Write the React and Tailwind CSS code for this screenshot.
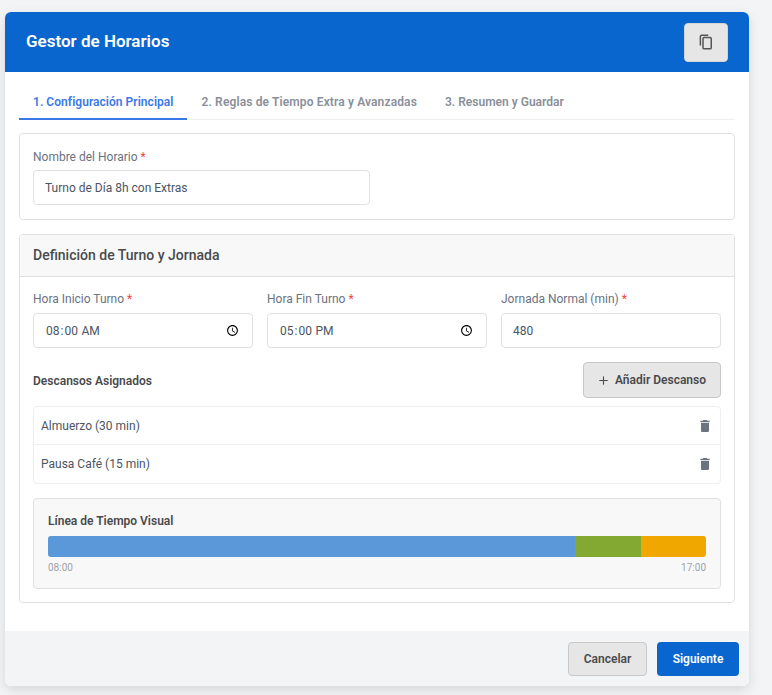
import { Plus } from "lucide-react";

const BREAKS = ["Almuerzo (30 min)", "Pausa Café (15 min)"];

const SHIFT_FIELDS = [
  { label: "Hora Inicio Turno", type: "time", value: "08:00" },
  { label: "Hora Fin Turno", type: "time", value: "17:00" },
  { label: "Jornada Normal (min)", type: "text", value: "480" },
];

const TABS = [
  { label: "1. Configuración Principal", className: "border-[#3b78e7] tracking-[0.04px] text-[#3b78e7]" },
  { label: "2. Reglas de Tiempo Extra y Avanzadas", className: "border-transparent tracking-[0.13px] text-[#8a8f99]" },
  { label: "3. Resumen y Guardar", className: "border-transparent text-[#8a8f99]" },
];

function CopyIcon() {
  return (
    <svg viewBox="0 0 24 24" className="h-[18px] w-[18px]" fill="none" stroke="#555" strokeWidth="2" aria-hidden="true">
      <rect x="8" y="6" width="11" height="15" rx="1.5" />
      <path d="M4.5 16.5V4.5A1.5 1.5 0 0 1 6 3h9" />
    </svg>
  );
}

function TrashIcon() {
  return (
    <svg viewBox="0 0 24 24" className="h-4 w-4" fill="#6b7280" aria-hidden="true">
      <path d="M6 19c0 1.1.9 2 2 2h8c1.1 0 2-.9 2-2V7H6v12zM19 4h-3.5l-1-1h-5l-1 1H5v2h14V4z" />
    </svg>
  );
}

function Field({ label, children, className = "", labelClass = "mb-[5px]" }) {
  return (
    <div className={className}>
      <label className={`block text-[12px] leading-[18px] text-[#6b7280] ${labelClass}`}>
        {label} <span className="text-[#ef4444]">*</span>
      </label>
      {children}
    </div>
  );
}

const inputClass =
  "block h-[35px] w-full rounded-[4px] border border-[#e0e0e0] bg-white pl-[11px] pr-[10px] text-[12px] text-[#4b5563] outline-none";

export default function App() {
  return (
    <div className="min-h-screen bg-[#f3f4f6] pl-[5px] pt-3 font-['Roboto',sans-serif]">
      <div className="w-[744px] overflow-hidden rounded-[6px] bg-white shadow-[0_4px_12px_rgba(0,0,0,0.12)]">
        <header className="flex h-[60px] items-center justify-between bg-[#0a66cf] pl-[21px] pr-[21px]">
          <h1 className="text-[17px] font-semibold text-white">Gestor de Horarios</h1>
          <button type="button" className="flex h-[39px] w-[44px] items-center justify-center rounded-[4px] border border-[#d4d4d4] bg-[#e6e6e6]">
            <CopyIcon />
          </button>
        </header>

        <div className="px-[14px] pb-7 pt-3">
          <nav className="flex h-[36px] border-b border-[#eeeff1]">
            {TABS.map((tab) => (
              <button
                key={tab.label}
                type="button"
                className={`-mb-px border-b-2 px-[14px] pt-px text-[12px] font-semibold ${tab.className}`}
              >
                {tab.label}
              </button>
            ))}
          </nav>

          <section className="mt-[13px] h-[87px] rounded-[4px] border border-[#e0e0e0] px-[13px] pt-[14px]">
            <Field label="Nombre del Horario" className="w-[337px]" labelClass="mb-1">
              <input className={inputClass} defaultValue="Turno de Día 8h con Extras" />
            </Field>
          </section>

          <section className="mt-[14px] overflow-hidden rounded-[4px] border border-[#e0e0e0]">
            <div className="flex h-[42px] items-center border-b border-[#e0e0e0] bg-[#f8f8f9] px-[13px]">
              <h2 className="text-[14px] font-medium text-[#4a4a4a]">Definición de Turno y Jornada</h2>
            </div>

            <div className="px-[13px] pb-[13px] pt-[13px]">
              <div className="grid grid-cols-3 gap-[14px]">
                {SHIFT_FIELDS.map((field) => (
                  <Field key={field.label} label={field.label}>
                    <input type={field.type} className={inputClass} defaultValue={field.value} />
                  </Field>
                ))}
              </div>

              <div className="mt-[14px] flex items-center justify-between">
                <h3 className="pt-px text-[12px] font-semibold text-[#4a4a4a]">Descansos Asignados</h3>
                <button
                  type="button"
                  className="flex h-9 w-[138px] items-center justify-center gap-[5px] rounded-[4px] border border-[#c9c9c9] bg-[#e6e6e6] pr-px text-[12px] font-semibold text-[#4a4a4a]"
                >
                  <Plus className="h-[13px] w-[13px]" aria-hidden="true" />
                  Añadir Descanso
                </button>
              </div>

              <ul className="mt-2 rounded-[4px] border border-[#eeeff1]">
                {BREAKS.map((item) => (
                  <li key={item} className="flex h-[38px] items-center justify-between border-b border-[#eeeff1] pl-[7px] pr-[7px] text-[12px] text-[#4b5563] last:border-b-0">
                    {item}
                    <TrashIcon />
                  </li>
                ))}
              </ul>

              <div className="mt-[14px] h-[91px] rounded-[4px] border border-[#e0e0e0] bg-[#f8f8f9] px-[14px] pt-[14px]">
                <h4 className="text-[12px] font-semibold leading-[16px] text-[#4a4a4a]">Línea de Tiempo Visual</h4>
                <div className="mt-[7px] flex h-[21px] overflow-hidden rounded-[3px]">
                  <div className="w-[527px] bg-[#5a98d9]" />
                  <div className="w-[66px] bg-[#84a933]" />
                  <div className="flex-1 bg-[#f0a800]" />
                </div>
                <div className="mt-[5px] flex justify-between text-[10px] leading-[12px] text-[#9ca3af]">
                  <span>08:00</span>
                  <span>17:00</span>
                </div>
              </div>
            </div>
          </section>
        </div>

        <footer className="flex h-[55px] items-center justify-end gap-[10px] bg-[#f3f4f6] pr-[10px]">
          <button type="button" className="h-[34px] w-[79px] rounded-[4px] border border-[#c9c9c9] bg-[#e6e6e6] text-[12px] font-semibold text-[#4a4a4a]">
            Cancelar
          </button>
          <button type="button" className="h-[34px] w-[82px] rounded-[4px] bg-[#0a66cf] text-[12px] font-semibold text-white">
            Siguiente
          </button>
        </footer>
      </div>
    </div>
  );
}
